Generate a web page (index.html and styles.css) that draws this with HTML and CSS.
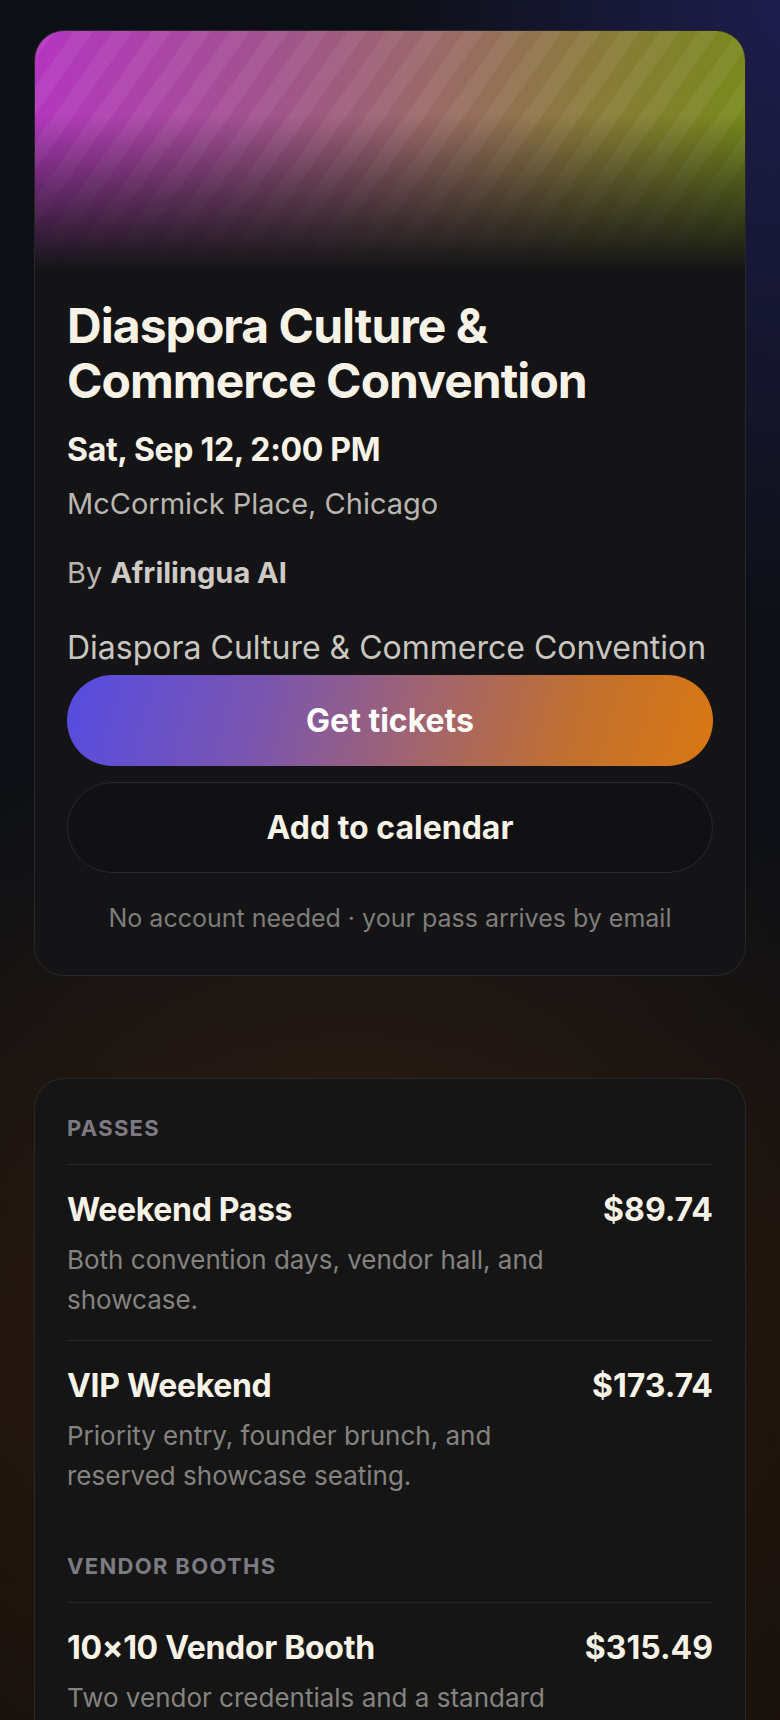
FILE: index.html
```html
<!DOCTYPE html>
<html lang="en">
<head>
<meta charset="utf-8">
<meta name="viewport" content="width=device-width, initial-scale=1">
<title>Diaspora Culture &amp; Commerce Convention</title>
<link rel="stylesheet" href="styles.css">
</head>
<body>
<main class="page">
  <article class="card event">
    <div class="banner"></div>
    <div class="event-body">
      <h1 class="title">Diaspora Culture &amp; Commerce Convention</h1>
      <p class="date">Sat, Sep 12, 2:00 PM</p>
      <p class="venue">McCormick Place, Chicago</p>
      <p class="host">By <strong>Afrilingua AI</strong></p>
      <p class="summary">Diaspora Culture &amp; Commerce Convention</p>
      <div class="actions">
        <button class="btn btn-primary" type="button">Get tickets</button>
        <button class="btn btn-ghost" type="button">Add to calendar</button>
      </div>
      <p class="note">No account needed · your pass arrives by email</p>
    </div>
  </article>

  <section class="card tickets">
    <div class="group">
      <h2 class="group-label">Passes</h2>
      <div class="row">
        <div class="row-main">
          <h3 class="row-name">Weekend Pass</h3>
          <p class="row-desc">Both convention days, vendor hall, and showcase.</p>
        </div>
        <span class="row-price">$89.74</span>
      </div>
      <div class="row">
        <div class="row-main">
          <h3 class="row-name">VIP Weekend</h3>
          <p class="row-desc">Priority entry, founder brunch, and reserved showcase seating.</p>
        </div>
        <span class="row-price">$173.74</span>
      </div>
    </div>
    <div class="group">
      <h2 class="group-label">Vendor booths</h2>
      <div class="row">
        <div class="row-main">
          <h3 class="row-name">10×10 Vendor Booth</h3>
          <p class="row-desc">Two vendor credentials and a standard booth space in the vendor hall.</p>
        </div>
        <span class="row-price">$315.49</span>
      </div>
    </div>
  </section>
</main>
</body>
</html>
```

FILE: styles.css
```css
* { box-sizing: border-box; }

html, body {
  margin: 0;
  padding: 0;
}

body {
  min-height: 1720px;
  font-family: Inter, "Noto Sans", "Liberation Sans", sans-serif;
  color: #f6f2e8;
  background:
    radial-gradient(ellipse 560px 900px at 100% 0%, rgba(40, 38, 115, 0.6), transparent 70%),
    radial-gradient(ellipse 760px 700px at 45% 1250px, rgba(90, 50, 20, 0.35), transparent 80%),
    linear-gradient(to bottom, #0d1016 0px, #0e1015 850px, #19110c 1300px, #1b120d 1720px);
  overflow: hidden;
}

.page {
  padding: 30px 34px 0;
  display: flex;
  flex-direction: column;
  gap: 102px;
}

.card {
  background: #141416;
  border: 1px solid rgba(255, 255, 255, 0.08);
  border-radius: 30px;
  overflow: hidden;
}

.banner {
  height: 239px;
  background:
    linear-gradient(to bottom, rgba(20, 20, 22, 0) 35%, rgba(20, 20, 22, 0.55) 70%, #141416 100%),
    repeating-linear-gradient(125deg, rgba(255, 255, 255, 0.06) 0 16px, rgba(255, 255, 255, 0) 16px 32px),
    linear-gradient(100deg, #b535c2 0%, #a2528e 32%, #9a6a66 55%, #8a7a3a 75%, #758c16 100%);
}

.event-body {
  padding: 28px 32px 41px;
}

.title {
  margin: 0;
  font-size: 48px;
  line-height: 55px;
  font-weight: 700;
  letter-spacing: -0.02em;
  color: #f8f3e6;
}

.date {
  margin: 22px 0 0;
  font-size: 32px;
  line-height: 40px;
  font-weight: 700;
  letter-spacing: -0.01em;
  color: #f8f3e6;
}

.venue {
  margin: 15px 0 0;
  font-size: 29px;
  line-height: 38px;
  color: #b9b6b0;
}

.host {
  margin: 31px 0 0;
  font-size: 29px;
  line-height: 38px;
  color: #b9b6b0;
}

.host strong {
  font-weight: 700;
  color: #cfcbc4;
}

.summary {
  margin: 36px 0 0;
  font-size: 32px;
  line-height: 40px;
  color: #c9c6c0;
}

.actions {
  margin-top: 7px;
  display: flex;
  flex-direction: column;
  gap: 16px;
}

.btn {
  height: 91px;
  border-radius: 46px;
  font-family: inherit;
  font-size: 32px;
  font-weight: 700;
  color: #f8f3e6;
  cursor: pointer;
}

.btn-primary {
  border: 0;
  color: #ffffff;
  background: linear-gradient(105deg, #564ce2 0%, #7a55b0 30%, #a2646e 55%, #c2702f 78%, #d97812 100%);
}

.btn-ghost {
  background: #111113;
  border: 1px solid #2a2a2e;
}

.note {
  margin: 29px 0 0;
  text-align: center;
  font-size: 25px;
  line-height: 32px;
  color: #7f7d7a;
}

.tickets {
  padding: 35px 32px 40px;
  background: #161515;
}

.group + .group {
  margin-top: 36px;
}

.group-label {
  margin: 0 0 22px;
  font-size: 22px;
  line-height: 28px;
  font-weight: 700;
  letter-spacing: 0.06em;
  text-transform: uppercase;
  color: #7c7b82;
}

.row {
  display: flex;
  justify-content: space-between;
  align-items: flex-start;
  gap: 24px;
  border-top: 1px solid #26262a;
  padding: 26px 0 20px;
}

.row-main {
  flex: 1;
  min-width: 0;
}

.row-name,
.row-price {
  margin: 0;
  font-size: 32px;
  line-height: 38px;
  font-weight: 700;
  letter-spacing: -0.01em;
  color: #f8f3e6;
}

.row-price {
  white-space: nowrap;
  letter-spacing: 0;
}

.row-desc {
  margin: 11px 0 0;
  font-size: 26px;
  line-height: 40px;
  color: #85837f;
}
```
